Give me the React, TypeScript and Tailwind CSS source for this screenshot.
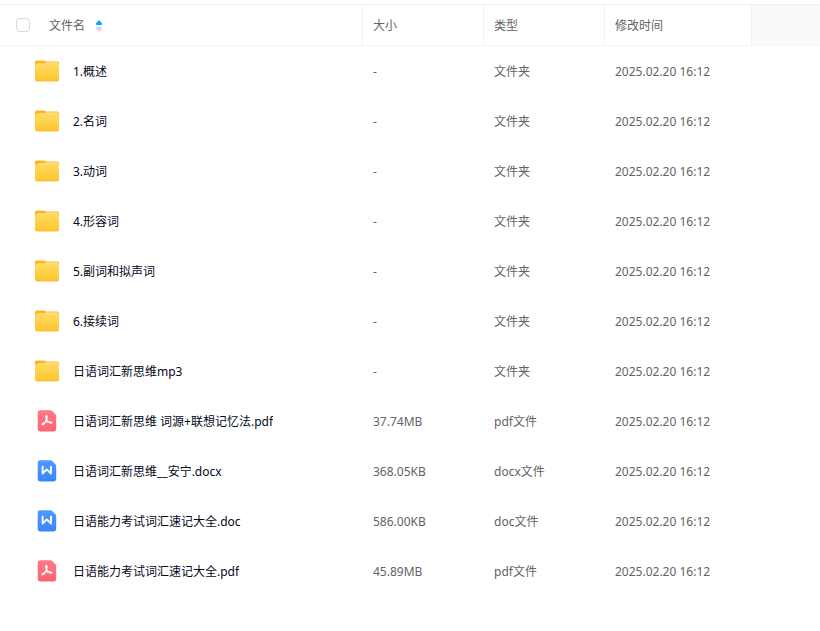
import { useState } from "react";

type FileKind = "folder" | "pdf" | "word";

type FileItem = {
  name: string;
  size: string;
  type: string;
  kind: FileKind;
};

const modified = "2025.02.20 16:12";

const files: FileItem[] = [
  { name: "1.概述", size: "-", type: "文件夹", kind: "folder" },
  { name: "2.名词", size: "-", type: "文件夹", kind: "folder" },
  { name: "3.动词", size: "-", type: "文件夹", kind: "folder" },
  { name: "4.形容词", size: "-", type: "文件夹", kind: "folder" },
  { name: "5.副词和拟声词", size: "-", type: "文件夹", kind: "folder" },
  { name: "6.接续词", size: "-", type: "文件夹", kind: "folder" },
  { name: "日语词汇新思维mp3", size: "-", type: "文件夹", kind: "folder" },
  { name: "日语词汇新思维 词源+联想记忆法.pdf", size: "37.74MB", type: "pdf文件", kind: "pdf" },
  { name: "日语词汇新思维__安宁.docx", size: "368.05KB", type: "docx文件", kind: "word" },
  { name: "日语能力考试词汇速记大全.doc", size: "586.00KB", type: "doc文件", kind: "word" },
  { name: "日语能力考试词汇速记大全.pdf", size: "45.89MB", type: "pdf文件", kind: "pdf" },
];

const Gradients = () => (
  <svg className="absolute h-0 w-0" aria-hidden="true">
    <defs>
      <linearGradient id="folder" x1="0" y1="0" x2="0" y2="1">
        <stop offset="0" stopColor="#ffdc62" />
        <stop offset="1" stopColor="#ffc52e" />
      </linearGradient>
      <linearGradient id="pdf" x1="0" y1="0" x2="0" y2="1">
        <stop offset="0" stopColor="#ff7b88" />
        <stop offset="1" stopColor="#ff6272" />
      </linearGradient>
      <linearGradient id="word" x1="0" y1="0" x2="0" y2="1">
        <stop offset="0" stopColor="#5299ff" />
        <stop offset="1" stopColor="#3a86fb" />
      </linearGradient>
    </defs>
  </svg>
);

const FileIcon = ({ kind }: { kind: FileKind }) => {
  if (kind === "folder") {
    return (
      <svg viewBox="0 0 24 24" className="h-6 w-6 shrink-0" aria-hidden="true">
        <path d="M0 3.2Q0 1.4 1.8 1.4H8.6Q9.6 1.4 10.2 2L10.9 2.6H22Q24 2.6 24 4.6V12H0Z" fill="#ffb61c" />
        <path d="M1.6 6.4Q1.6 4.4 3.4 4.4H10.2L11.6 3.6H21.6Q22.8 3.6 22.8 5V9H1.6Z" fill="#ffeeb4" />
        <path
          d="M0 7.2Q0 5.2 2 5.2H9.3Q10.1 5.2 10.7 4.8L11.2 4.5Q11.6 4.2 12.4 4.2H22Q24 4.2 24 6.2V20.2Q24 22.2 22 22.2H2Q0 22.2 0 20.2Z"
          fill="url(#folder)"
        />
        <path d="M.3 20.8Q.7 21.9 2 21.9H22Q23.3 21.9 23.7 20.8" fill="none" stroke="#fbb824" strokeWidth=".7" />
      </svg>
    );
  }

  return (
    <svg viewBox="0 0 24 24" className="h-6 w-6 shrink-0" aria-hidden="true">
      <path
        d="M2.7 3.6Q2.7 1.2 5.1 1.2H15.6Q16.4 1.2 17 1.8L20.6 5.4Q21.2 6 21.2 6.8V20Q21.2 22.4 18.8 22.4H5.1Q2.7 22.4 2.7 20Z"
        fill={kind === "pdf" ? "url(#pdf)" : "url(#word)"}
      />
      {kind === "pdf" ? (
        <path
          d="M11.3 6.6C12.5 6.4 12.2 8.5 11.7 10C10.9 12.3 9.4 15 7.9 15.7C6.7 16.1 6.6 14.9 7.9 14.2C10.2 13 14.1 12.6 16.1 13C17.4 13.4 16.9 14.5 15.7 14.2C13.7 13.7 11.7 11.3 10.9 8.9C10.6 7.8 10.5 6.8 11.3 6.6Z"
          fill="none"
          stroke="#fff"
          strokeWidth="1.2"
          strokeLinejoin="round"
        />
      ) : (
        <path
          d="M7.6 7.7V14.6L11.8 10.4L16 14.6V7.7"
          fill="none"
          stroke="#fff"
          strokeWidth="1.9"
          strokeLinecap="round"
          strokeLinejoin="round"
        />
      )}
    </svg>
  );
};

const SortIcon = () => (
  <svg viewBox="0 0 8 12" className="h-3 w-2" aria-hidden="true">
    <path d="M3.5 .4Q4 -.1 4.5 .4L6.8 3Q7.6 5 6 5H2Q.4 5 1.2 3Z" fill="#06a7ff" />
    <path d="M3.5 11.6Q4 12.1 4.5 11.6L6.8 9Q7.6 7 6 7H2Q.4 7 1.2 9Z" fill="#d4d7de" />
  </svg>
);

const headCell = "h-[42px] border-y border-r border-[#f1f2f4] px-2.5 pt-0.5 font-normal";
const bodyCell = "px-2.5 pt-0.5";

export default function App() {
  const [allChecked, setAllChecked] = useState(false);

  return (
    <main className="min-h-screen bg-white pt-1 font-['Noto_Sans','Noto_Sans_CJK_SC',sans-serif] text-xs text-[#636363]">
      <Gradients />
      <table className="w-full table-fixed border-separate border-spacing-0 text-left">
        <colgroup>
          <col />
          <col className="w-[121px]" />
          <col className="w-[121px]" />
          <col className="w-[147px]" />
          <col className="w-[68px]" />
        </colgroup>
        <thead>
          <tr>
            <th className="h-[42px] border-y border-r border-[#f1f2f4] pl-4 font-normal">
              <div className="flex items-center gap-[19px]">
                <input
                  type="checkbox"
                  aria-label="全选"
                  checked={allChecked}
                  onChange={(e) => setAllChecked(e.target.checked)}
                  className="h-3.5 w-3.5 appearance-none rounded border border-[#d4d7de] bg-white checked:border-[#06a7ff] checked:bg-[#06a7ff]"
                />
                <button type="button" className="flex items-center gap-2.5 pt-0.5">
                  文件名
                  <SortIcon />
                </button>
              </div>
            </th>
            <th className={headCell}>大小</th>
            <th className={headCell}>类型</th>
            <th className={headCell}>修改时间</th>
            <td className="border-y border-[#f1f2f4] bg-[#fafafa]" />
          </tr>
        </thead>
        <tbody>
          {files.map((file) => (
            <tr key={file.name} className="h-[50px] hover:bg-[#fafafc]">
              <td className="pl-[35px]">
                <div className="flex items-center gap-3.5">
                  <FileIcon kind={file.kind} />
                  <a href="#" className="truncate pt-0.5 text-[#03081a]">
                    {file.name}
                  </a>
                </div>
              </td>
              <td className={bodyCell}>{file.size}</td>
              <td className={bodyCell}>{file.type}</td>
              <td className={bodyCell}>{modified}</td>
              <td />
            </tr>
          ))}
        </tbody>
      </table>
    </main>
  );
}
